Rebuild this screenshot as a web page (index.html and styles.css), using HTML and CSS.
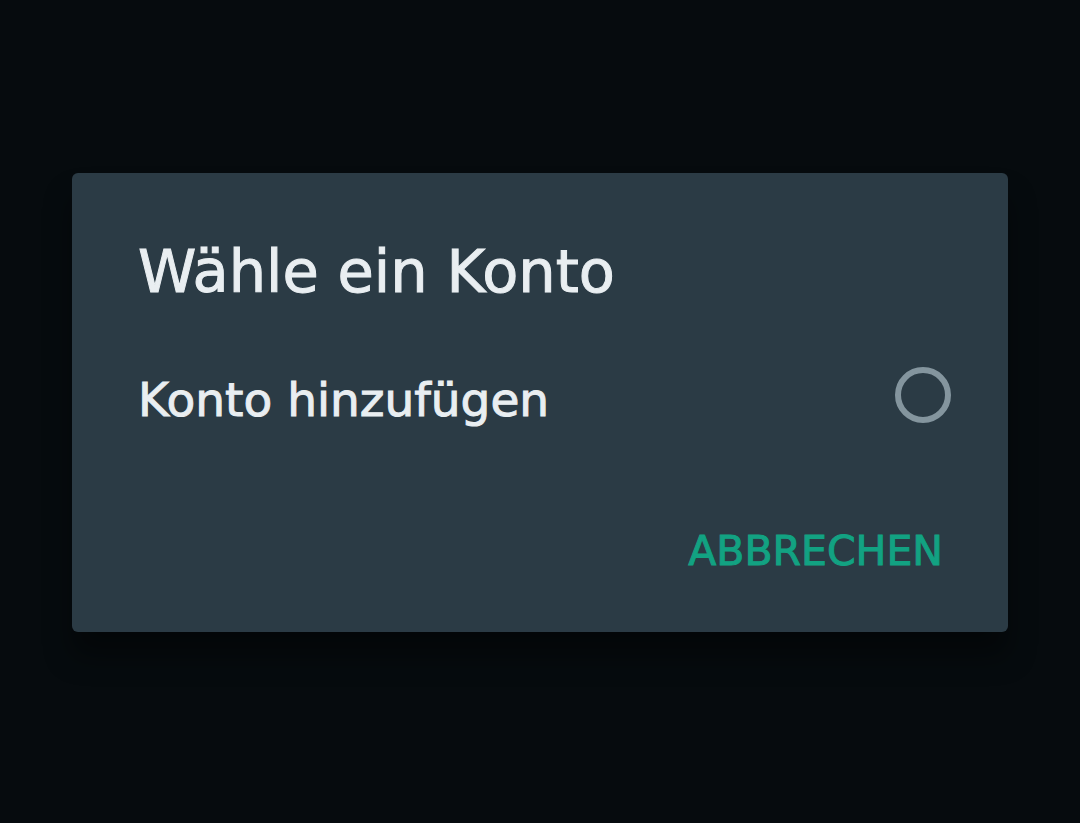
FILE: index.html
```html
<!DOCTYPE html>
<html lang="de">
<head>
    <meta charset="UTF-8">
    <meta name="viewport" content="width=device-width, initial-scale=1.0">
    <title>Wähle ein Konto</title>
    <link rel="stylesheet" href="styles.css">
</head>
<body>
    <form class="dialog" role="dialog" aria-labelledby="dialog-title">
        <h1 class="title" id="dialog-title">Wähle ein Konto</h1>

        <div class="option">
            <label class="option-label" for="add-account">Konto hinzufügen</label>
            <input class="option-radio" type="radio" name="account" id="add-account">
        </div>

        <div class="actions">
            <button class="cancel-button" type="button">ABBRECHEN</button>
        </div>
    </form>
</body>
</html>
```

FILE: styles.css
```css
* {
    margin: 0;
    padding: 0;
    box-sizing: border-box;
}

body {
    font-family: "DejaVu Sans", Verdana, sans-serif;
    background-color: #060b0e;
    color: #e9eef1;
    min-height: 100vh;
    padding: 0 72px 18px;
    display: flex;
    align-items: center;
    -webkit-text-stroke: 1px currentColor;
}

.dialog {
    width: 100%;
    padding: 66px 57px 51px 66px;
    background-color: #2b3b45;
    border-radius: 6px;
    box-shadow: 0 24px 28px rgba(0, 0, 0, 0.4);
}

.title {
    font-size: 59px;
    font-weight: normal;
    line-height: 66px;
}

.option {
    display: flex;
    align-items: flex-start;
    justify-content: space-between;
    margin-top: 62px;
}

.option-label {
    font-size: 47px;
    line-height: 66px;
}

.option-radio {
    appearance: none;
    flex-shrink: 0;
    width: 56px;
    height: 56px;
    border: 6px solid #84959e;
    border-radius: 50%;
    cursor: pointer;
}

.option-radio:checked {
    border-color: #0fa382;
}

.actions {
    display: flex;
    justify-content: flex-end;
    margin-top: 88px;
}

.cancel-button {
    padding: 0 8px;
    border: none;
    background-color: transparent;
    color: #12a282;
    font-family: inherit;
    font-size: 41px;
    line-height: 60px;
    cursor: pointer;
}
```
